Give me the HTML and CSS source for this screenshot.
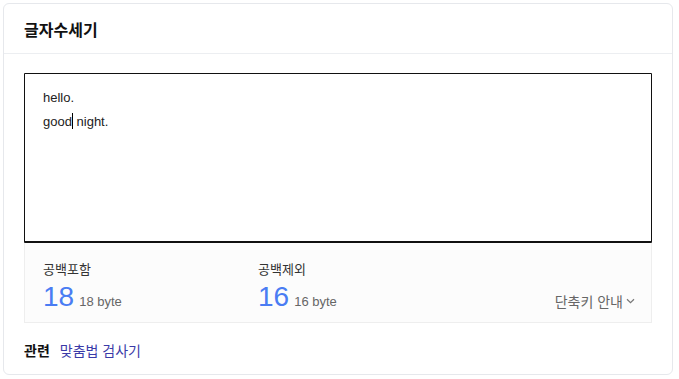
FILE: index.html
```html
<!DOCTYPE html>
<html lang="ko">
<head>
<meta charset="utf-8">
<link rel="stylesheet" href="styles.css">
</head>
<body>
<div class="card">
  <div class="card-head"><h1 class="title">글자수세기</h1></div>
  <div class="card-body">
    <div class="editor">
      <div class="line">hello.</div>
      <div class="line">good<span class="caret"></span> night.</div>
    </div>
    <div class="stats">
      <div class="stat">
        <div class="stat-label">공백포함</div>
        <div class="stat-value"><span class="num">18</span><span class="byte">18 byte</span></div>
      </div>
      <div class="stat">
        <div class="stat-label">공백제외</div>
        <div class="stat-value"><span class="num">16</span><span class="byte">16 byte</span></div>
      </div>
      <div class="shortcut">단축키 안내<svg class="chev" width="9" height="6" viewBox="0 0 9 6"><path d="M1 1.2 L4.5 4.6 L8 1.2" fill="none" stroke="#777" stroke-width="1.2"/></svg></div>
    </div>
    <div class="related"><span class="rel-label">관련</span><a class="rel-link" href="#">맞춤법 검사기</a></div>
  </div>
</div>
</body>
</html>
```
FILE: styles.css
```css
html, body { margin: 0; padding: 0; background: #fff; }
body {
  font-family: "Liberation Sans", "Noto Sans CJK KR", sans-serif;
  color: #222;
  padding: 3px 6px 4px 3px;
}
.card {
  border: 1px solid #e6e8ec;
  border-radius: 6px;
  box-sizing: border-box;
  width: 670px;
  height: 372px;
}
.card-head {
  height: 49px;
  border-bottom: 1px solid #eceef1;
  display: flex;
  align-items: center;
  padding-left: 20px;
}
.title {
  margin: 0;
  font-size: 16px;
  font-weight: 700;
  color: #111;
  font-family: "Noto Sans CJK KR", sans-serif;
  padding-top: 1px;
}
.card-body { padding: 19px 20px 0 20px; }
.editor {
  height: 155px;
  border: 1px solid #111;
  border-bottom-width: 2px;
  border-radius: 1px;
  padding: 12px 18px 0 18px;
  font-size: 13px;
  line-height: 24px;
  color: #222;
}
.line { height: 24px; }
.caret {
  display: inline-block;
  width: 1px;
  height: 16px;
  background: #000;
  vertical-align: -3px;
}
.stats {
  height: 79px;
  border: 1px solid #eeeeee;
  border-top: none;
  background: #fcfcfc;
  display: flex;
  padding: 0 16px 0 18px;
}
.stat { width: 215px; padding-top: 17px; }
.stat-label {
  font-family: "Noto Sans CJK KR", sans-serif;
  font-size: 13px;
  line-height: 18px;
  color: #333;
}
.stat-value { display: flex; align-items: baseline; margin-top: 4px; }
.num {
  font-size: 28px;
  line-height: 30px;
  color: #4a7cf3;
  margin-right: 5px;
}
.byte { font-size: 13px; color: #666; }
.shortcut {
  margin-left: auto;
  align-self: flex-end;
  margin-bottom: 11px;
  font-family: "Noto Sans CJK KR", sans-serif;
  font-size: 14px;
  color: #666;
  display: flex;
  align-items: center;
  gap: 3px;
}
.related {
  display: flex;
  align-items: center;
  padding-top: 17px;
  font-family: "Noto Sans CJK KR", sans-serif;
  font-size: 14px;
}
.rel-label { font-weight: 700; color: #111; margin-right: 10px; }
.rel-link { color: #3a3aa8; text-decoration: none; }
```
